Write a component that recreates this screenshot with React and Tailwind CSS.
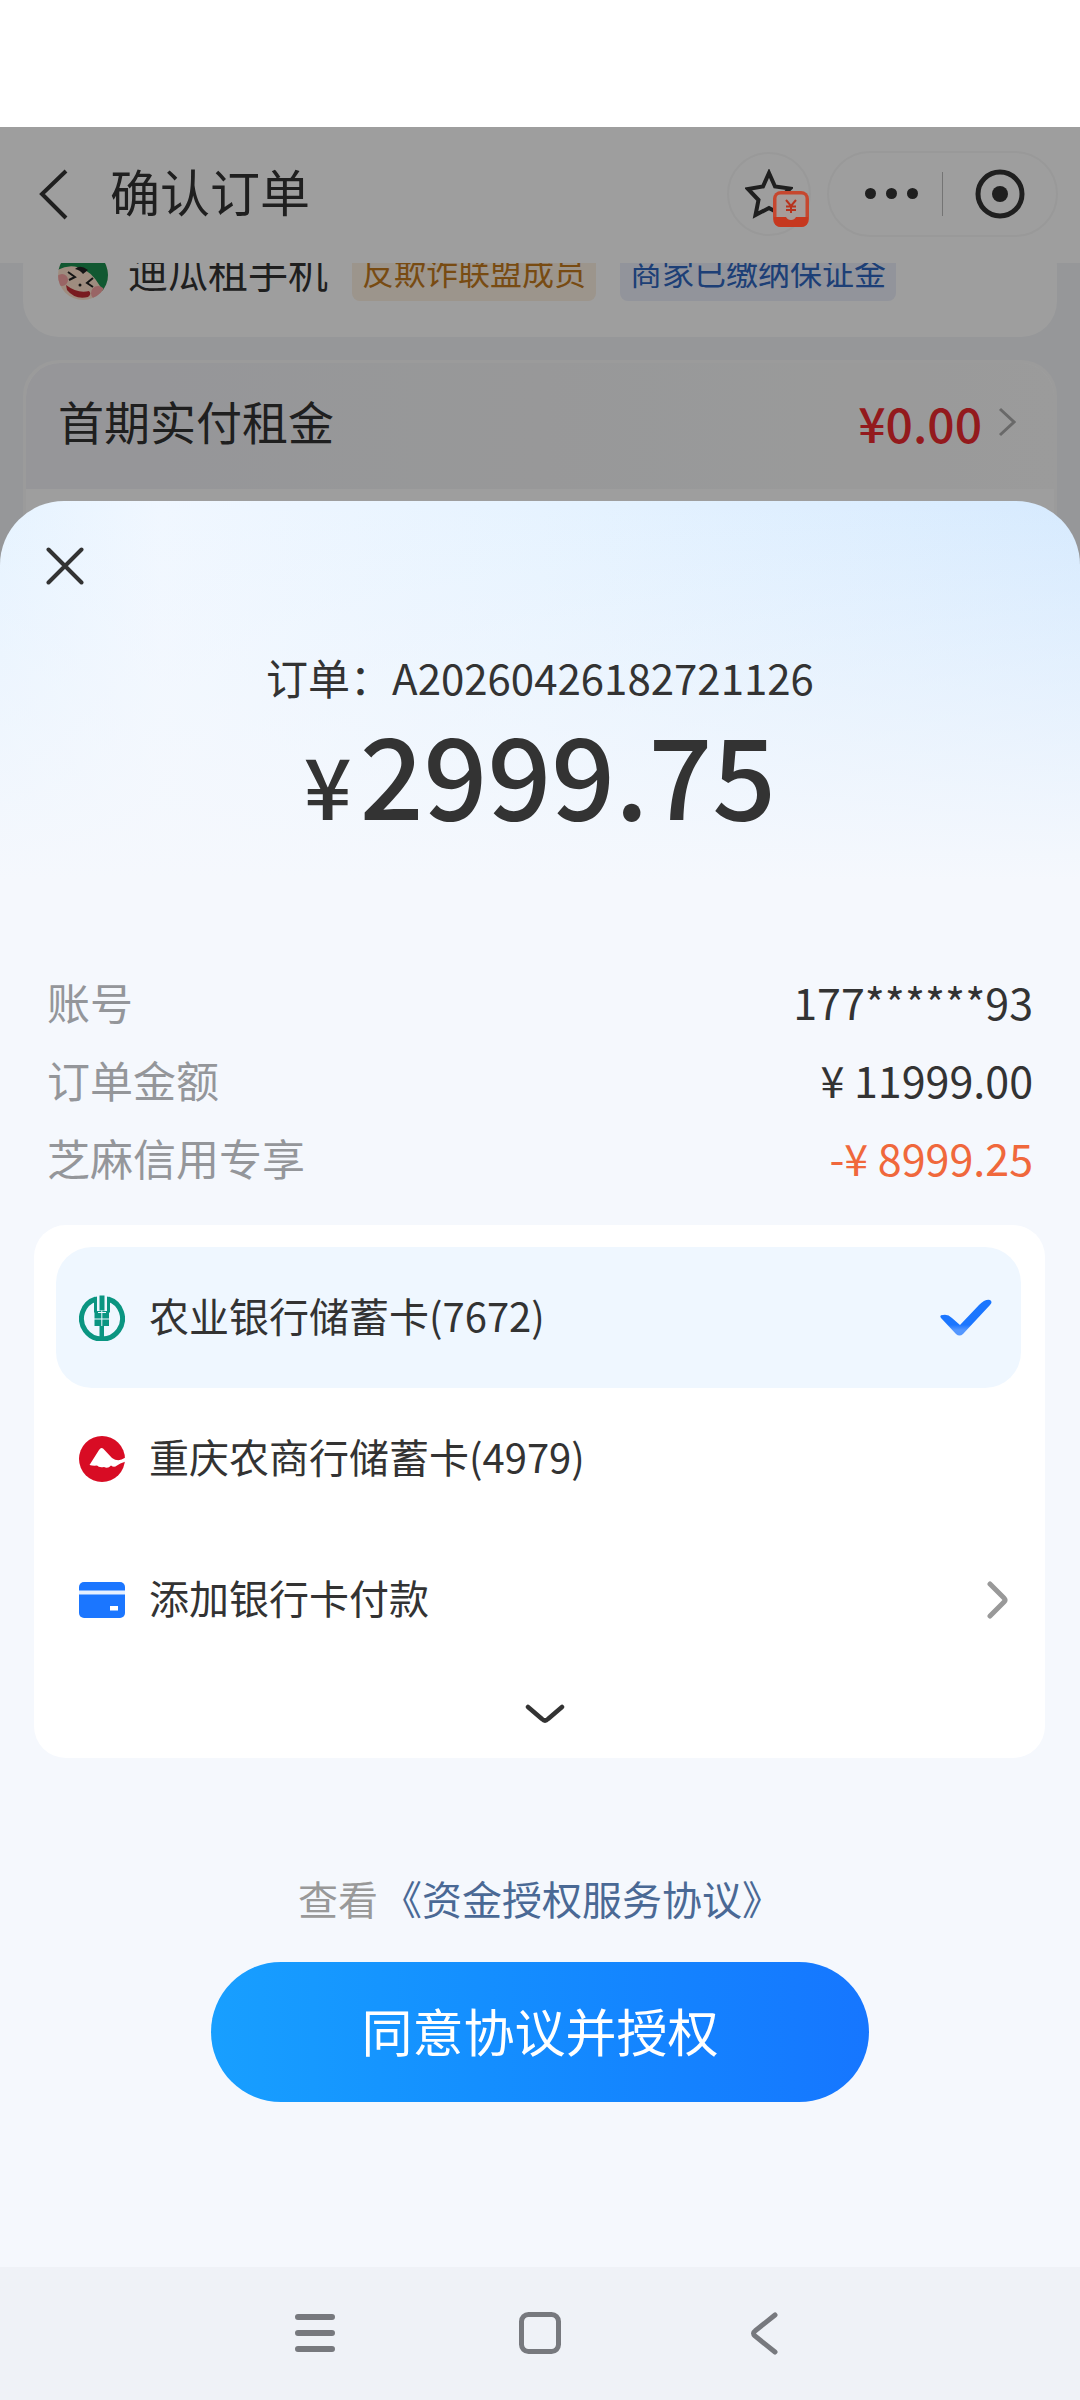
import { useState } from "react";

const details = [
  { label: "账号", value: "177******93" },
  { label: "订单金额", value: "¥ 11999.00" },
  { label: "芝麻信用专享", value: "-¥ 8999.25", discount: true },
];

const cards = [
  { id: "7672", name: "农业银行储蓄卡(7672)", Logo: AbcLogo },
  { id: "4979", name: "重庆农商行储蓄卡(4979)", Logo: CqrcbLogo },
];

function ShopAvatar() {
  return (
    <svg viewBox="0 0 50 50" className="size-[50px] shrink-0">
      <clipPath id="avatar">
        <circle cx="25" cy="25" r="25" />
      </clipPath>
      <g clipPath="url(#avatar)">
        <rect width="50" height="50" fill="#ffe3cd" />
        <path d="M-2 21 Q12 12 27 20 Q38 26 46 44 L54 40 L50 -4 L-4 -4Z" fill="#1c8f50" />
        <path d="M17 19 q5 -5 13 1 l-5 4 q-3 -4 -8 -5Z" fill="#222" />
        <circle cx="4" cy="30" r="6" fill="#f7a3a3" />
        <circle cx="40" cy="43" r="7" fill="#f7a3a3" />
        <path d="M10 22 l7 5 l-6 3 M35 28 l-6 5 l6 4" fill="none" stroke="#222" strokeWidth="2" />
        <path d="M8 35 q12 9 23 6 q3 3 -1 6 q-13 3 -21 -7Z" fill="#c32d35" />
        <circle cx="22" cy="35" r="1.5" fill="#222" />
      </g>
    </svg>
  );
}

function AbcLogo() {
  return (
    <svg viewBox="0 0 46 46" className="size-[46px] shrink-0">
      <path d="M17 4 A20.5 20.5 0 1 0 29 4" fill="none" stroke="#0a9581" strokeWidth="5" />
      <path
        d="M20.500 .5h5v15h-5zM15 2.500l3 -1v16h-3zM28 1.500l3 1v15h-3zM15.500 16h14.500v15h-14.500z"
        fill="#0a9581"
      />
      <path d="M20.500 31h4.500v13h-4.500z" fill="#0a9581" />
      <path d="M15 24h16M22.800 15.500v15.500M19 17.500h8" stroke="#eff7ff" strokeWidth="1" />
    </svg>
  );
}

function CqrcbLogo() {
  return (
    <svg viewBox="0 0 46 46" className="size-[46px] shrink-0">
      <circle cx="23" cy="23" r="23" fill="#d80c24" />
      <path
        d="M10.500 29 L20 14 Q22.500 10 25.500 14 L33 22 Q40 27 47 21 L47 25.500 Q41 27 38 29.500 Q35 32 32 29.500 Q29 33 25 31 Q20 32 18 29.500 Q14 30 10.500 29Z"
        fill="#fff"
      />
    </svg>
  );
}

function AddCardIcon() {
  return (
    <svg viewBox="0 0 46 46" className="size-[46px] shrink-0">
      <rect y="5" width="46" height="36" rx="5" fill="#1b76ff" />
      <path d="M0 15.500h46" stroke="#e6f0ff" strokeWidth="4" />
      <rect x="31" y="29" width="8" height="4.500" fill="#fff" />
    </svg>
  );
}

function Check() {
  return (
    <svg viewBox="0 0 52 38" className="h-[38px] w-[52px] shrink-0">
      <defs>
        <linearGradient id="check" x1="0" y1="0" x2="0" y2="1">
          <stop offset="0.700" stopColor="#1b76ff" />
          <stop offset="0.850" stopColor="#5497ff" />
        </linearGradient>
      </defs>
      <path
        d="M1 19 Q-1 16 3 16 Q8 15 12 19 L20 26 L39 6 Q45 0 50 1 Q53 3 50 6 L23 35 Q19.500 38 16 35Z"
        fill="url(#check)"
      />
    </svg>
  );
}

function Header() {
  return (
    <header className="flex h-[136px] items-center bg-white pb-[3px] pl-8 pr-[22px] text-[#333]">
      <button aria-label="返回" className="mr-8">
        <svg viewBox="0 0 46 52" className="h-[52px] w-[46px]" fill="none" stroke="currentColor" strokeWidth="4">
          <path d="M34 3 L10 26 L34 50" />
        </svg>
      </button>
      <h1 className="flex-1 pb-2 text-[50px] leading-[60px]">确认订单</h1>

      {/* Favourite + coupon badge */}
      <button
        aria-label="收藏"
        className="relative mr-4 flex size-[84px] items-center justify-center rounded-full border-2 border-[#f7f7f7]"
      >
        <svg viewBox="0 0 48 50" className="h-[50px] w-12" fill="none" stroke="currentColor" strokeWidth="4">
          <path d="M24 4 L30 17.500 L45 19.500 L34 30 L37 46 L24 39 L10.500 46 L13.500 31 L3 20 L18 17.500Z" />
        </svg>
        <svg viewBox="0 0 38 38" className="absolute -right-px bottom-1.5 z-20 size-[38px]">
          <rect x="1" y="1" width="36" height="36" rx="8" fill="#c6472f" />
          <rect x="4.500" y="4.500" width="29" height="28" rx="4" fill="#a79c99" />
          <path d="M2 27h12q1.500 3 5 3t5-3h12v3q0 7-7 7h-20q-7 0-7-7Z" fill="#c6381f" />
          <path d="M14 10l5 6 5-6M14 16.500h10M14 20h10M19 16v7" fill="none" stroke="#b8321c" strokeWidth="2" />
        </svg>
      </button>

      {/* Mini program capsule */}
      <div className="flex h-[86px] w-[231px] items-center rounded-full border-2 border-[#f7f7f7]">
        <button aria-label="更多" className="flex w-1/2 items-center justify-end gap-[10px] pr-6">
          <i className="size-[11px] rounded-full bg-[#333]" />
          <i className="size-[11px] rounded-full bg-[#333]" />
          <i className="size-[11px] rounded-full bg-[#333]" />
        </button>
        <span className="h-11 w-px bg-[#bbb]" />
        <button aria-label="关闭小程序" className="flex w-1/2 justify-center">
          <svg viewBox="0 0 50 50" className="size-[50px]">
            <circle cx="25" cy="25" r="22" fill="none" stroke="#333" strokeWidth="5" />
            <circle cx="25" cy="25" r="8" fill="#333" />
          </svg>
        </button>
      </div>
    </header>
  );
}

function OrderPage() {
  return (
    <div className="relative bg-[#f2f4f7] text-[#333]">
      <Header />

      <main className="overflow-hidden px-[23px]">
        {/* Shop, scrolled half under the header */}
        <section className="-mt-8 flex items-center rounded-[36px] bg-white px-[35px] pb-9 pt-[18px]">
          <ShopAvatar />
          <span className="ml-5 pb-2 text-[40px] leading-[44px]">迪瓜租手机</span>
          <span className="ml-6 rounded-lg bg-[#fcf0e2] px-[10px] pb-2 text-[32px] leading-[44px] text-[#c27a1e]">
            反欺诈联盟成员
          </span>
          <span className="ml-6 rounded-lg bg-[#eceffb] px-[10px] pb-2 text-[32px] leading-[44px] text-[#2f66bf]">
            商家已缴纳保证金
          </span>
        </section>

        <section className="mt-[23px] h-[241px] rounded-t-[36px] border-[3px] border-[#fafafa] bg-white">
          <button className="flex h-[126px] w-full items-center justify-between rounded-t-[34px] bg-linear-to-r from-[#f2f2f7] via-[#f5f6f7] to-[#fafafa] pb-2 pl-8 pr-[38px]">
            <span className="pb-1 text-[46px] leading-[60px]">首期实付租金</span>
            <span className="flex items-center gap-4 text-[48px] font-medium leading-[60px] text-[#ee2a30]">
              ¥0.00
              <svg viewBox="0 0 18 32" className="h-8 w-[18px]" fill="none" stroke="#aaa" strokeWidth="3">
                <path d="M2 3 L16 16 L2 29" />
              </svg>
            </span>
          </button>
        </section>
      </main>

      <div className="pointer-events-none absolute inset-0 z-10 bg-black/38" />
    </div>
  );
}

export default function App() {
  const [selected, setSelected] = useState("7672");

  return (
    <div className="flex min-h-screen flex-col bg-white pt-[127px] font-['Noto_Sans_CJK_SC',sans-serif]">
      <OrderPage />

      <section
        role="dialog"
        aria-label="订单授权"
        className="relative z-20 -mt-[100px] flex flex-1 flex-col rounded-t-[64px] bg-[linear-gradient(to_bottom,transparent,#f5f8fd_380px),linear-gradient(to_left,#d6eafe,#e6f3ff_50%,#f0f7ff_85%,#e6f3ff)] pt-8 text-[#333]"
      >
        <button aria-label="关闭" className="ml-8 flex size-[66px] items-center justify-center">
          <svg viewBox="0 0 38 38" className="size-[38px]" fill="none" stroke="currentColor" strokeWidth="4" strokeLinecap="round">
            <path d="M2.500 2.500 L35.500 35.500 M35.500 2.500 L2.500 35.500" />
          </svg>
        </button>

        {/* Amount */}
        <div className="mt-12 text-center">
          <p className="text-[42px] leading-[60px]">订单：A20260426182721126</p>
          <p className="text-[112px] font-medium leading-[128px]">
            <span className="mr-2 text-[84px]">¥</span>2999.75
          </p>
        </div>

        <dl className="mt-[114px] px-[47px] text-[43px] leading-[78px]">
          {details.map((row) => (
            <div key={row.label} className="flex justify-between">
              <dt className="text-[#94969a]">{row.label}</dt>
              <dd className={row.discount ? "text-[#f0683c]" : ""}>{row.value}</dd>
            </div>
          ))}
        </dl>

        {/* Payment methods */}
        <div className="ml-[34px] mr-[35px] mt-[29px] rounded-[32px] bg-white pl-[22px] pr-6 pt-[22px] text-[40px] leading-[60px]">
          {cards.map(({ id, name, Logo }) => (
            <label
              key={id}
              className="relative flex h-[141px] items-center rounded-[36px] pl-[23px] pr-[29px] has-checked:bg-[#eff7ff]"
            >
              <input
                type="radio"
                name="card"
                className="sr-only"
                checked={selected === id}
                onChange={() => setSelected(id)}
              />
              <Logo />
              <span className="ml-6 flex-1 pb-1.5">{name}</span>
              {selected === id && <Check />}
            </label>
          ))}
          <button className="flex h-[141px] w-full items-center pl-[23px] pr-3 text-left">
            <AddCardIcon />
            <span className="ml-6 flex-1 pb-1.5">添加银行卡付款</span>
            <svg viewBox="0 0 24 40" className="h-10 w-6" fill="none" stroke="#999" strokeWidth="5" strokeLinecap="round" strokeLinejoin="round">
              <path d="M5 4 L19 18 Q21 20 19 22 L5 36" />
            </svg>
          </button>
          <button aria-label="展开更多" className="flex h-[88px] w-full items-center justify-center pl-3">
            <svg viewBox="0 0 40 20" className="h-5 w-10" fill="none" stroke="currentColor" strokeWidth="4.5" strokeLinecap="round" strokeLinejoin="round">
              <path d="M3 3 L17 15 Q20 18 23 15 L37 3" />
            </svg>
          </button>
        </div>

        <p className="mt-[110px] text-center text-[40px] leading-[60px] text-[#999]">
          查看
          <a href="#agreement" className="ml-1 text-[#4a6995]">《资金授权服务协议》</a>
        </p>
        <button className="mx-auto mb-10 mt-[34px] h-[140px] w-[658px] max-w-full rounded-full bg-linear-to-r from-[#189fff] to-[#1676ff] pb-1 text-[51px] leading-[60px] text-white">
          同意协议并授权
        </button>
      </section>

      {/* System navigation */}
      <nav className="relative z-20 flex h-[133px] items-start justify-center gap-[179px] bg-[#eff2f7] pt-[43px] text-[#77797e]">
        <button aria-label="最近任务">
          <svg viewBox="0 0 46 46" className="size-[46px]" stroke="currentColor" strokeWidth="6" strokeLinecap="round">
            <path d="M6 7h34M6 23h34M6 39h34" />
          </svg>
        </button>
        <button aria-label="主屏幕">
          <svg viewBox="0 0 46 46" className="size-[46px]" fill="none" stroke="currentColor" strokeWidth="5">
            <rect x="4.500" y="4.500" width="37" height="37" rx="7" />
          </svg>
        </button>
        <button aria-label="后退">
          <svg viewBox="0 0 46 46" className="size-[46px]" fill="none" stroke="currentColor" strokeWidth="5" strokeLinecap="round">
            <path d="M33 5 L13 21 Q10 23 13 26 L33 42" />
          </svg>
        </button>
      </nav>
    </div>
  );
}
